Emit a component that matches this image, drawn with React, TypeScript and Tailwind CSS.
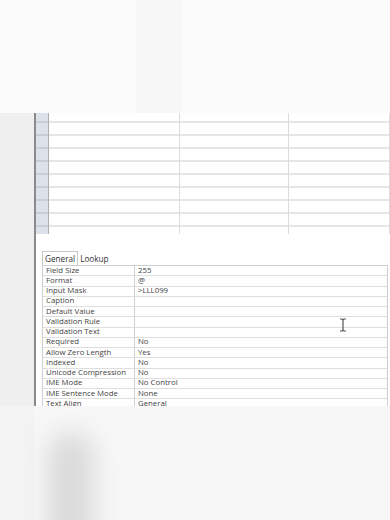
import React from "react";

const props: [string, string][] = [
  ["Field Size", "255"],
  ["Format", "@"],
  ["Input Mask", ">LLL099"],
  ["Caption", ""],
  ["Default Value", ""],
  ["Validation Rule", ""],
  ["Validation Text", ""],
  ["Required", "No"],
  ["Allow Zero Length", "Yes"],
  ["Indexed", "No"],
  ["Unicode Compression", "No"],
  ["IME Mode", "No Control"],
  ["IME Sentence Mode", "None"],
  ["Text Align", "General"],
];

export default function App() {
  const font = { fontFamily: '"Open Sans", "Noto Sans", sans-serif' };
  return (
    <div className="w-[390px] h-[520px] overflow-hidden bg-white flex flex-col" style={font}>
      {/* faded top band */}
      <div className="h-[113px] shrink-0 bg-[#fbfbfb] flex">
        <div className="w-[136px]" />
        <div className="w-[46px] bg-[#f7f7f7]" />
        <div className="flex-1" />
      </div>

      {/* main work area */}
      <div className="h-[293px] shrink-0 flex overflow-hidden">
        <div className="w-[34px] bg-[#efefef] shrink-0" />
        <div className="w-[2px] bg-[#8a8a8a] shrink-0" />
        <div className="flex-1 flex flex-col relative">
          {/* datasheet grid */}
          <div className="h-[121px] flex shrink-0">
            <div className="w-[13px] bg-[#dde2ea] border-r border-[#a9adb4] flex flex-col">
              <div className="h-[10px] border-b-2 border-[#c9ced6]" />
              {Array.from({ length: 8 }).map((_, i) => (
                <div key={i} className="h-[13px] border-b-2 border-[#c9ced6]" />
              ))}
            </div>
            {[131, 109, 101].map((w, c) => (
              <div key={c} className="flex flex-col border-r border-[#dcdcdc]" style={{ width: w }}>
                <div className="h-[10px] border-b-2 border-[#e6e6e6]" />
                {Array.from({ length: 8 }).map((_, i) => (
                  <div key={i} className="h-[13px] border-b-2 border-[#e6e6e6]" />
                ))}
              </div>
            ))}
          </div>

          <div className="h-[17px] shrink-0" />

          {/* property tabs */}
          <div className="flex items-end h-[14px] pl-[6px] text-[8.2px] text-[#333] leading-none shrink-0">
            <div className="px-[2px] pt-[1px] h-[14px] border border-b-0 border-[#c8c8c8] bg-white flex items-center">General</div>
            <div className="px-[2px] h-[11px] flex items-center">Lookup</div>
          </div>

          {/* property grid */}
          <div className="ml-[6px] mr-[2px] border border-[#cfcfcf] text-[7.8px] text-[#444] leading-none shrink-0">
            {props.map(([k, v]) => (
              <div key={k} className="flex h-[10.25px] border-b border-[#dedede]">
                <div className="w-[92px] pl-[3px] border-r border-[#cfcfcf] flex items-center">{k}</div>
                <div className="flex-1 pl-[3px] flex items-center">{v}</div>
              </div>
            ))}
          </div>

          {/* text cursor */}
          <svg className="absolute left-[303px] top-[205px]" width="8" height="14" viewBox="0 0 8 14">
            <path d="M1 1h2l1 1 1-1h2M4 2v10M1 13h2l1-1 1 1h2" fill="none" stroke="#555" strokeWidth="1.2" />
          </svg>
        </div>
      </div>

      {/* faded bottom band */}
      <div className="flex-1 bg-[#f7f7f7] flex overflow-hidden">
        <div className="w-[34px] bg-[#f3f3f3]" />
        <div className="w-[14px]" />
        <div className="w-[46px] mt-[26px] h-[130px] bg-[#dadada] blur-md rounded-full" />
      </div>
    </div>
  );
}
